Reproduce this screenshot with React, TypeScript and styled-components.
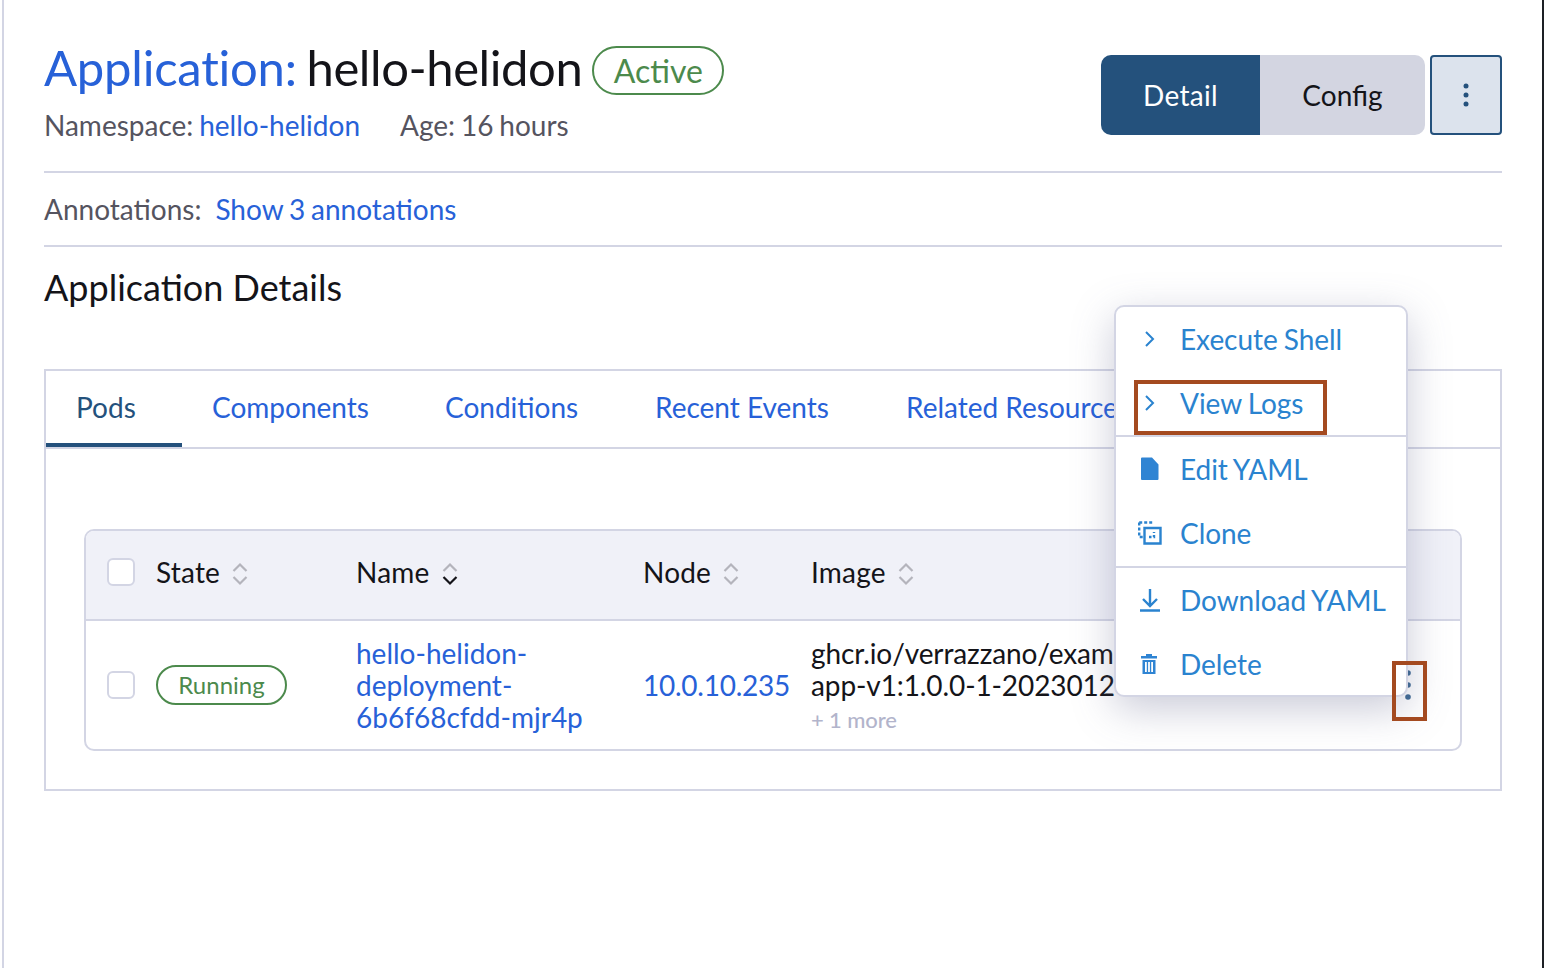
import React from "react";
import styled, { createGlobalStyle } from "styled-components";

const Global = createGlobalStyle`
  html, body { margin: 0; padding: 0; background: #fff; }
  body { font-family: Lato, "Open Sans", sans-serif; color: #141419; }
  * { box-sizing: border-box; }
`;

const Page = styled.div`
  position: relative;
  width: 1544px;
  height: 968px;
  overflow: hidden;
  padding: 0 42px 0 44px;
  background: #fff;
  &::before {
    content: "";
    position: absolute;
    left: 2px;
    top: 0;
    bottom: 0;
    width: 2px;
    background: #d3d5e4;
  }
  &::after {
    content: "";
    position: absolute;
    left: 1542px;
    top: 0;
    bottom: 0;
    width: 2px;
    background: #1d2025;
  }
`;

const Header = styled.header`
  display: flex;
  justify-content: space-between;
  align-items: flex-start;
  height: 173px;
  border-bottom: 2px solid #d3d5e4;
  padding-top: 40px;
`;

const TitleRow = styled.div`
  display: flex;
  align-items: center;
  height: 56px;
`;

const Title = styled.h1`
  margin: 0;
  padding-bottom: 2px;
  font-size: 49px;
  font-weight: 400;
  line-height: 56px;
  letter-spacing: -0.43px;
  word-spacing: -2.3px;
  color: #141419;
  white-space: nowrap;
`;

const TitleLink = styled.span`
  color: #2761d8;
  letter-spacing: -0.23px;
`;

const Pill = styled.span<{ $large?: boolean }>`
  display: inline-flex;
  align-items: center;
  justify-content: center;
  border: 2px solid #4c8a4c;
  border-radius: 25px;
  color: #4c8a4c;
  white-space: nowrap;
  height: ${(p) => (p.$large ? "49px" : "40px")};
  width: ${(p) => (p.$large ? "132px" : "131px")};
  font-size: ${(p) => (p.$large ? "32px" : "24px")};
  margin: ${(p) => (p.$large ? "5px 0 0 10px" : "0")};
`;

const Meta = styled.div`
  display: flex;
  gap: 40px;
  margin-top: 11px;
  font-size: 28px;
  line-height: 36px;
  word-spacing: -1.3px;
  color: #55545f;
`;

const Link = styled.a`
  color: #2761d8;
`;

const Actions = styled.div`
  display: flex;
  gap: 5px;
  margin-top: 15px;
`;

const Segmented = styled.div`
  display: flex;
  height: 80px;
  border-radius: 10px;
  overflow: hidden;
`;

const Segment = styled.button<{ $active?: boolean; $w: number }>`
  width: ${(p) => p.$w}px;
  border: 0;
  font: 400 28px Lato, sans-serif;
  letter-spacing: ${(p) => (p.$active ? "0.3px" : "0")};
  background: ${(p) => (p.$active ? "#24517c" : "#d3d5e1")};
  color: ${(p) => (p.$active ? "#fff" : "#141419")};
`;

const KebabButton = styled.button`
  width: 72px;
  height: 80px;
  border: 2px solid #24517c;
  border-radius: 4px;
  background: #dce3ed;
  color: #24517c;
  display: flex;
  align-items: center;
  justify-content: center;
  padding: 0;
`;

const AnnotationRow = styled.div`
  display: flex;
  align-items: center;
  gap: 14px;
  height: 74px;
  border-bottom: 2px solid #d3d5e4;
  font-size: 28px;
  word-spacing: -1.3px;
  color: #55545f;
`;

const SectionTitle = styled.h2`
  margin: 0;
  height: 122px;
  padding-top: 18px;
  font-size: 36px;
  font-weight: 400;
  line-height: 44px;
  color: #141419;
`;

const TabPanel = styled.section`
  border: 2px solid #d3d5e4;
  height: 422px;
`;

const TabBar = styled.nav`
  display: flex;
  height: 78px;
  border-bottom: 2px solid #d3d5e4;
  white-space: nowrap;
  overflow: hidden;
`;

const Tab = styled.div<{ $active?: boolean; $w: number }>`
  width: ${(p) => p.$w}px;
  flex: none;
  height: 76px;
  padding-left: 30px;
  line-height: 72px;
  font-size: 28px;
  color: ${(p) => (p.$active ? "#24517c" : "#2761d8")};
  border-bottom: ${(p) => (p.$active ? "4px solid #24517c" : "0")};
`;

const TableWrap = styled.div`
  margin: 80px 38px 0 38px;
  border: 2px solid #d3d5e4;
  border-radius: 10px;
  height: 222px;
  overflow: hidden;
`;

const columns = "49px 200px 287px 168px 1fr";

const HeadRow = styled.div`
  display: grid;
  grid-template-columns: ${columns};
  height: 90px;
  background: #f0f1f8;
  border-bottom: 2px solid #d3d5e4;
  align-items: center;
  font-size: 28px;
  letter-spacing: 0.2px;
  padding: 0 0 7px 21px;
`;

const BodyRow = styled.div`
  display: grid;
  grid-template-columns: ${columns};
  height: 128px;
  align-items: center;
  font-size: 28px;
  line-height: 32px;
  padding-left: 21px;
`;

const Check = styled.span`
  display: block;
  width: 28px;
  height: 28px;
  background: #fff;
  border: 2px solid #d3d5e4;
  border-radius: 6px;
`;

const HeadCell = styled.div`
  display: flex;
  align-items: center;
  gap: 12px;
`;

const SortIcon = styled.svg`
  margin-top: 5px;
  flex: none;
`;

const NameLink = styled.a`
  display: block;
  color: #2761d8;
`;

const NodeLink = styled(NameLink)`
  letter-spacing: -0.25px;
`;

const ImageCell = styled.div`
  margin-top: 2px;
  color: #141419;
  white-space: nowrap;
  letter-spacing: -0.1px;
`;

const More = styled.div`
  margin-top: 4px;
  font-size: 22px;
  line-height: 30px;
  font-weight: 500;
  color: #b2b4cb;
`;

const Menu = styled.div`
  position: absolute;
  left: 1114px;
  top: 305px;
  width: 294px;
  height: 392px;
  background: #fff;
  border: 2px solid #d3d5e4;
  border-radius: 10px;
  box-shadow: 0 12px 40px rgba(100, 104, 140, 0.34);
`;

const MenuGroup = styled.div<{ $h: number; $last?: boolean }>`
  height: ${(p) => p.$h}px;
  border-bottom: ${(p) => (p.$last ? "0" : "2px solid #d3d5e4")};
`;

const MenuItem = styled.div`
  display: flex;
  align-items: center;
  height: 64px;
  font-size: 28px;
  word-spacing: -1px;
  letter-spacing: -0.05px;
  color: #2a83cf;
  white-space: nowrap;
  padding-left: 20px;
`;

const MenuIcon = styled.span`
  width: 44px;
  height: 28px;
  flex: none;
  display: flex;
  align-items: center;
  justify-content: flex-start;
`;

const Callout = styled.div<{ $x: number; $y: number; $w: number; $h: number }>`
  position: absolute;
  left: ${(p) => p.$x}px;
  top: ${(p) => p.$y}px;
  width: ${(p) => p.$w}px;
  height: ${(p) => p.$h}px;
  border: 4px solid #a44a20;
`;

const RowKebab = styled.svg`
  position: absolute;
  left: 1405px;
  top: 669px;
`;

const Sort = ({ dark }: { dark?: boolean }) => (
  <SortIcon width="16" height="24" viewBox="0 0 16 24" fill="none" strokeWidth="2.2">
    <path d="M1.500 9 8 2.500 14.500 9" stroke="#b4b4bc" />
    <path d="M1.500 15 8 21.500 14.500 15" stroke={dark ? "#141419" : "#b4b4bc"} />
  </SortIcon>
);

const Chevron = () => (
  <svg width="20" height="20" viewBox="0 0 20 20" fill="none" stroke="#2a83cf" strokeWidth="2" style={{ marginLeft: 4 }}>
    <path d="M6 3 13 10 6 17" />
  </svg>
);

const FileIcon = () => (
  <svg width="18" height="24" viewBox="0 0 18 24" style={{ marginLeft: 5 }}>
    <path d="M1 .5h10l6.500 7V22a1 1 0 0 1-1 1H1a1 1 0 0 1-1-1V1.500a1 1 0 0 1 1-1z" fill="#2f84d3" />
  </svg>
);

const CloneIcon = () => (
  <svg width="24" height="24" viewBox="0 0 24 24" fill="none" stroke="#2a83cf" strokeWidth="2.4" style={{ marginLeft: 2 }}>
    <path d="M6.500 22.500V7h16v15.500z" />
    <path d="M1.200 1.500h14M1.200 1.500v14.500h5" strokeDasharray="3 2" />
    <path d="M11 16h5v-5" strokeDasharray="2.500 2" />
  </svg>
);

const DownloadIcon = () => (
  <svg width="22" height="24" viewBox="0 0 22 24" fill="none" stroke="#2a83cf" strokeWidth="2.400" style={{ marginLeft: 3 }}>
    <path d="M11 1v16M4 11l7 7 7-7M1 22.500h20" />
  </svg>
);

const TrashIcon = () => (
  <svg width="16" height="20" viewBox="0 0 16 20" style={{ marginLeft: 5 }}>
    <path d="M5 0h6v2h5v2.500H0V2h5z" fill="#2f84d3" />
    <path d="M1.500 6h13v14h-13zM4 8v10h1.800V8zM7.100 8v10h1.800V8zM10.200 8v10H12V8z" fill="#2f84d3" fillRule="evenodd" />
  </svg>
);

const Dots = () => (
  <svg width="6" height="26" viewBox="0 0 6 26" fill="#24517c">
    <circle cx="3" cy="4" r="2.500" />
    <circle cx="3" cy="13" r="2.500" />
    <circle cx="3" cy="22" r="2.500" />
  </svg>
);

export default function App() {
  return (
    <Page>
      <Global />
      <Header>
        <div>
          <TitleRow>
            <Title>
              <TitleLink>Application:</TitleLink> hello-helidon
            </Title>
            <Pill $large>Active</Pill>
          </TitleRow>
          <Meta>
            <span>
              Namespace: <Link>hello-helidon</Link>
            </span>
            <span>Age: 16 hours</span>
          </Meta>
        </div>
        <Actions>
          <Segmented>
            <Segment $active $w={159}>Detail</Segment>
            <Segment $w={165}>Config</Segment>
          </Segmented>
          <KebabButton aria-label="More actions">
            <Dots />
          </KebabButton>
        </Actions>
      </Header>
      <AnnotationRow>
        <span>Annotations:</span>
        <Link>Show 3 annotations</Link>
      </AnnotationRow>
      <SectionTitle>Application Details</SectionTitle>
      <TabPanel>
        <TabBar>
          <Tab $active $w={136}>Pods</Tab>
          <Tab $w={233}>Components</Tab>
          <Tab $w={210}>Conditions</Tab>
          <Tab $w={251}>Recent Events</Tab>
          <Tab $w={280}>Related Resources</Tab>
        </TabBar>
        <TableWrap>
          <HeadRow>
            <Check />
            <HeadCell>State <Sort /></HeadCell>
            <HeadCell>Name <Sort dark /></HeadCell>
            <HeadCell>Node <Sort /></HeadCell>
            <HeadCell>Image <Sort /></HeadCell>
          </HeadRow>
          <BodyRow>
            <Check />
            <div><Pill>Running</Pill></div>
            <NameLink>hello-helidon-<br />deployment-<br />6b6f68cfdd-mjr4p</NameLink>
            <NodeLink>10.0.10.235</NodeLink>
            <ImageCell>
              ghcr.io/verrazzano/examp<br />app-v1:1.0.0-1-2023012
              <More>+ 1 more</More>
            </ImageCell>
          </BodyRow>
        </TableWrap>
      </TabPanel>
      <RowKebab width="6" height="32" viewBox="0 0 6 32" fill="#3d6993">
        <circle cx="3" cy="4" r="2.800" />
        <circle cx="3" cy="16" r="2.800" />
        <circle cx="3" cy="28" r="2.800" />
      </RowKebab>
      <Menu>
        <MenuGroup $h={130}>
          <MenuItem><MenuIcon><Chevron /></MenuIcon>Execute Shell</MenuItem>
          <MenuItem><MenuIcon><Chevron /></MenuIcon>View Logs</MenuItem>
        </MenuGroup>
        <MenuGroup $h={131}>
          <MenuItem><MenuIcon><FileIcon /></MenuIcon>Edit YAML</MenuItem>
          <MenuItem><MenuIcon><CloneIcon /></MenuIcon>Clone</MenuItem>
        </MenuGroup>
        <MenuGroup $h={127} $last>
          <MenuItem><MenuIcon><DownloadIcon /></MenuIcon>Download YAML</MenuItem>
          <MenuItem><MenuIcon><TrashIcon /></MenuIcon>Delete</MenuItem>
        </MenuGroup>
      </Menu>
      <Callout $x={1134} $y={380} $w={193} $h={55} />
      <Callout $x={1392} $y={661} $w={35} $h={60} />
    </Page>
  );
}
